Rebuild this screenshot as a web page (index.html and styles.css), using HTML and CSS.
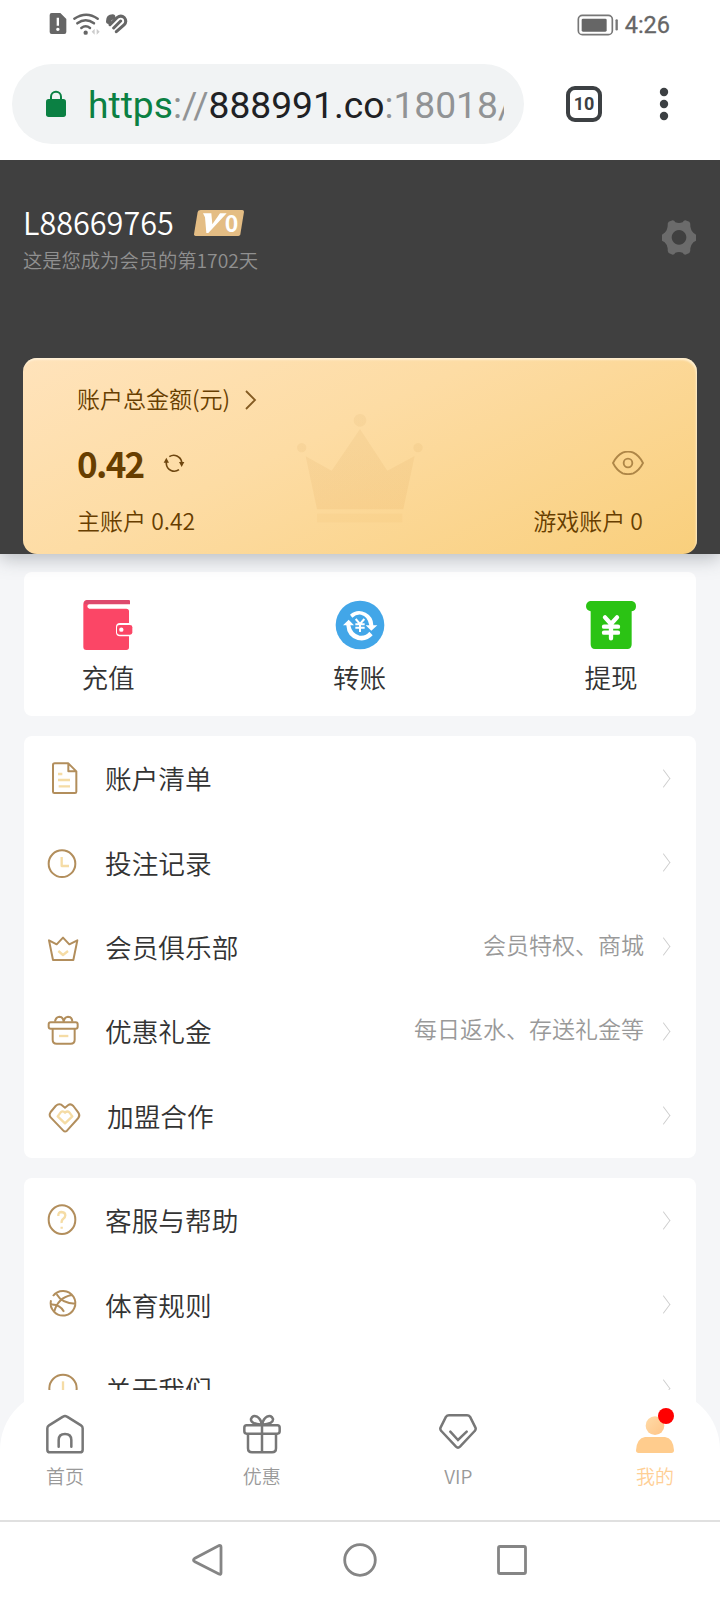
FILE: index.html
```html
<!DOCTYPE html>
<html lang="zh-CN">
<head>
<meta charset="utf-8">
<title>我的</title>
<link rel="stylesheet" href="styles.css">
</head>
<body>
<div class="screen">
  <div class="status">
    <svg class="status-left" width="80" height="24" viewBox="0 0 240 72">
      <path fill="#666" fill-rule="evenodd" d="M8 3h26l18 18v39q0 6-6 6H8q-6 0-6-6V9q0-6 6-6zM23 17v24h7V17zM26.500 47a5 5 0 1 0 .1 0z"/>
      <g fill="none" stroke="#666" stroke-width="7.500" stroke-linecap="round"><path d="M76 20q36-24 70 0"/><path d="M85 34q25-19 50 0"/><path d="M97 48q13-10 26 0"/></g>
      <circle cx="110" cy="62" r="6.500" fill="#666"/>
      <path d="M137 50v18l-9-9zM143 50v18l9-9z" fill="#ccc"/>
      <g fill="none" stroke="#666" stroke-linecap="round"><path d="M179 28q0-13 12-13" stroke-width="16"/><path d="M183 38l21-21q12-9 22 0 9 11-1 22L202 59M194 48l21-21" stroke-width="9"/></g>
    </svg>
    <div class="status-right">
      <svg width="42" height="22" viewBox="0 0 126 66"><rect x="4" y="4" width="102" height="58" rx="12" fill="none" stroke="#777" stroke-width="5"/><rect x="14" y="14" width="75" height="39" rx="4" fill="#666"/><path d="M119 19v27" stroke="#777" stroke-width="7" stroke-linecap="round"/></svg>
      <span class="clock">4:26</span>
    </div>
  </div>
  <div class="browser">
    <div class="omnibox">
      <svg width="22" height="28" viewBox="0 0 66 84"><rect x="3" y="27" width="60" height="54" rx="8" fill="#0b8043"/><path d="M18 29V20a15 15 0 0 1 30 0v9" fill="none" stroke="#0b8043" stroke-width="6"/></svg>
      <div class="url"><span class="scheme">https</span>://<span class="host">888991.co</span>:18018/</div>
    </div>
    <div class="tabs-count">10</div>
    <svg class="more" width="10" height="34" viewBox="0 0 10 34"><g fill="#3c4043"><circle cx="5" cy="5" r="4.200"/><circle cx="5" cy="17" r="4.200"/><circle cx="5" cy="29" r="4.200"/></g></svg>
  </div>

  <header class="profile">
    <div class="user">
      <div class="user-info">
        <div class="name-row"><span class="name">L88669765</span>
          <span class="badge"><svg width="50" height="26" viewBox="0 0 150 78"><path d="M20 0H145q5 0 5 5l-11 68q-1 5-6 5H5q-5 0-5-5L11 6q1-6 9-6z" fill="#e4bd84"/><path d="M27 10h25l3 33 23-33h20L43 69h-6l-4-47z" fill="#fff"/></svg><b class="badge-num">0</b></span>
        </div>
        <div class="since">这是您成为会员的第1702天</div>
      </div>
      <svg class="gear" width="34" height="35" viewBox="0 0 102 105"><path fill="#6b6b6b" fill-rule="evenodd" d="M20 5l12-4q5 0 8 6q11 4 22 0q3-6 8-6l12 4q4 4 3 14q2 14 9 19l8 6v18l-8 5q-7 7-9 18q1 10-3 14l-12 5q-5 0-8-6q-11-4-22 0q-3 6-8 6l-12-5q-4-4-3-14q-2-12-9-18l-8-5V44l8-6q7-5 9-19q-1-10 3-14zM51 30a22 22 0 1 0 .1 0z"/></svg>
    </div>
    <section class="balance">
      <svg class="crown-bg" width="126" height="112" viewBox="0 0 378 336"><defs><linearGradient id="cg" x2="0" y2="1"><stop offset="0" stop-color="#c99a50" stop-opacity=".10"/><stop offset="1" stop-color="#e0a050" stop-opacity=".14"/></linearGradient></defs><path fill="url(#cg)" d="M189 3a19 19 0 1 0 .1 0zM14 90a14 14 0 1 0 .1 0zM363 90a14 14 0 1 0 .1 0zM26 130l78 43L189 48l82 125 82-44-34 160H60z"/><path fill="#e0a050" fill-opacity=".08" d="M60 302h256v26H60z"/></svg>
      <div class="total">账户总金额(元)<svg width="12" height="22" viewBox="0 0 12 22"><path d="M1 2l9 9-9 9" fill="none" stroke="#845b22" stroke-width="1.800"/></svg></div>
      <div class="amount-row">
        <div class="amount">0.42</div>
        <svg class="refresh" width="20" height="20" viewBox="0 0 60 60"><g fill="none" stroke="#6f4710" stroke-width="5"><path d="M7 27v6A24 24 0 0 0 45 50"/><path d="M16 11A24 24 0 0 1 53 27v4"/></g><path d="M-1 29L7 14l8 15zM45 27h16l-8 15z" fill="#6f4710"/></svg>
        <svg class="eye" width="32" height="24" viewBox="0 0 96 72"><g fill="none" stroke="#ae8647" stroke-width="5.500"><path d="M3 36Q14 14 32 5q16-6 32 0q18 9 29 31Q82 58 64 67q-16 5-32 0Q14 58 3 36z" stroke-linejoin="round"/><circle cx="48" cy="36" r="13"/></g></svg>
      </div>
      <div class="accounts"><span>主账户 0.42</span><span>游戏账户 0</span></div>
    </section>
  </header>

  <main class="content">
    <section class="card actions">
      <div class="action"><svg width="50" height="50" viewBox="0 0 150 150"><path d="M14 0H137q4 0 4 5v8H19q-6 0-6 6t6 7H130q8 0 8 8v108q0 8-8 8H10q-9 0-9-9V13Q1 0 14 0z" fill="#fb4666"/><path d="M14 0H137q4 0 4 5v7H3Q6 0 14 0z" fill="#dd496d"/><path d="M139 69h-28q-12 0-12 12v16q0 12 12 12h28z" fill="#fff"/><rect x="102" y="75" width="46" height="29" rx="7" fill="#fb4666"/><circle cx="115" cy="89" r="6.500" fill="#fff"/></svg><span>充值</span></div>
      <div class="action"><svg width="50" height="50" viewBox="0 0 150 150"><circle cx="75" cy="75" r="73" fill="#42a6e8"/><path d="M45 44Q66 26 92 38q23 12 23 38h12l-18 16-17-16h11Q98 48 78 44 64 42 52 53z" fill="#fff"/><path d="M24 76l17-17 16 17H46q5 26 28 31 19 2 29-12l10 11q-17 20-45 14-32-9-34-44z" fill="#fff"/><path d="M62 57l13 15 13-15M61 73h28M61 83h28M75 72v24" fill="none" stroke="#fff" stroke-width="6"/></svg><span>转账</span></div>
      <div class="action"><svg width="50" height="50" viewBox="0 0 150 150"><path d="M12 3h126q12 3 12 16t-13 15v99q0 14-13 14H27q-13 0-13-14V34Q0 31 0 19T12 3z" fill="#2bc314"/><path d="M57 52l18 20 18-20M54 80h42M54 98h42M75 73v42" fill="none" stroke="#fff" stroke-width="13" stroke-linecap="round"/></svg><span>提现</span></div>
    </section>

    <section class="card menu">
      <div class="row"><svg class="ico" viewBox="0 0 108 108"><path d="M67 10H26q-5 0-5 5v80q0 4 4 4h62q4 0 4-4V34L67 10v24h23" class="d"/><path d="M36 42h13M36 60h36M38 79h34" class="l"/></svg><span class="label">账户清单</span><i class="chev"></i></div>
      <div class="row"><svg class="ico" viewBox="0 0 108 108"><circle cx="48" cy="56" r="40" class="d"/><path d="M47 36v27h22" class="l"/></svg><span class="label">投注记录</span><i class="chev"></i></div>
      <div class="row"><svg class="ico" viewBox="0 0 108 108"><path d="M9 34l12 59h61l12-59-24 12-19-20-19 20z" class="d"/><path d="M37 66l14 12 15-12" class="l"/></svg><span class="label">会员俱乐部</span><span class="hint">会员特权、商城</span><i class="chev"></i></div>
      <div class="row"><svg class="ico" viewBox="0 0 108 108"><rect x="8" y="28" width="87" height="19" rx="6" class="d"/><path d="M20 48v32q0 12 12 12h42q12 0 12-12V48M27 26q2-14 13-15 11 0 13 15 2-14 13-15 12 0 13 15" class="d"/><path d="M39 69h28" class="l"/></svg><span class="label">优惠礼金</span><span class="hint">每日返水、存送礼金等</span><i class="chev"></i></div>
      <div class="row"><svg class="ico" viewBox="0 0 108 108"><path d="M57 29L46 20q-9-4-17 4L14 42q-6 8 0 16l38 40q5 5 11 0l34-38q6-8 0-16L82 24q-8-8-15-3z" class="d"/><path d="M57 44q-6-7-13-1l-9 12 22 21 22-21-9-12q-7-6-13 1z" class="l"/></svg><span class="label shifted">加盟合作</span><i class="chev"></i></div>
    </section>

    <section class="card menu">
      <div class="row"><svg class="ico" viewBox="0 0 108 108"><ellipse cx="48" cy="53" rx="40" ry="43" class="d"/><path d="M37 42q-1-12 10-12 11 1 11 10 0 6-6 10t-5 13M47 74v6" class="l"/></svg><span class="label">客服与帮助</span><i class="chev"></i></div>
      <div class="row"><svg class="ico" viewBox="0 0 108 108"><path d="M21 27a37 37 0 1 1-6 13M32 22Q48 50 88 50M77 24Q35 32 24 76M13 53Q40 50 54 74" class="d"/></svg><span class="label">体育规则</span><i class="chev"></i></div>
      <div class="row"><svg class="ico" viewBox="0 0 108 108"><circle cx="51" cy="52" r="41" class="d"/><path d="M51 31v30" class="l"/></svg><span class="label">关于我们</span><i class="chev"></i></div>
    </section>
  </main>

  <div class="tabbar-wrap"><nav class="tabbar">
    <div class="tab"><svg width="38" height="40" viewBox="0 0 114 120"><path d="M4 43q0-6 5-9L51 8q6-4 12 0l42 26q5 3 5 9v64q0 8-8 8H12q-8 0-8-8z"/><path d="M38 98V78q0-18 19-18t19 18v20" stroke-linecap="round"/></svg><span>首页</span></div>
    <div class="tab"><svg width="38" height="40" viewBox="0 0 114 120"><rect x="4" y="34" width="106" height="25" rx="7"/><path d="M15 60v43q0 12 12 12h60q12 0 12-12V60M57 34v81M57 32Q22 30 24 15q5-13 18-7 11 6 15 24 4-18 15-24 13-6 18 7 2 15-33 17"/></svg><span>优惠</span></div>
    <div class="tab"><svg width="38" height="40" viewBox="0 0 114 120"><path d="M30 4h54q6 0 9 4l16 32q3 6-2 11L63 98q-6 6-12 0L7 51q-5-5-2-11L21 8q3-4 9-4zM34 53l23 25 26-25" stroke-linecap="round"/></svg><span>VIP</span></div>
    <div class="tab active"><svg width="38" height="40" viewBox="0 0 114 120"><defs><linearGradient id="ug" x2="1" y2="1"><stop stop-color="#ffdba8"/><stop offset="1" stop-color="#ffc486"/></linearGradient></defs><circle cx="57" cy="35" r="28" fill="url(#ug)"/><path d="M27 69h60q25 4 27 40 0 8-8 8H8q-8 0-8-8 2-36 27-40z" fill="#ffcc8d"/></svg><i class="dot"></i><span>我的</span></div>
  </nav></div>

  <div class="sysnav">
    <svg width="34" height="36" viewBox="0 0 34 36"><path d="M28 3.500Q30 3 30 5V31Q30 33 28 32L3.500 19.500Q1.500 18 3.500 16.500z"/></svg>
    <svg width="34" height="36" viewBox="0 0 34 36"><circle cx="17" cy="18" r="15.300"/></svg>
    <svg width="34" height="36" viewBox="0 0 34 36"><rect x="3.500" y="4.500" width="27" height="27" rx="1.500"/></svg>
  </div>
</div>
</body>
</html>
```

FILE: styles.css
```css
* { box-sizing: border-box; }
body { margin: 0; background: #fff; font-family: "Noto Sans CJK SC", sans-serif; font-weight: 350; }
svg { display: block; flex: none; }
i { font-style: normal; }
.screen { width: 720px; height: 1600px; overflow: hidden; display: flex; flex-direction: column; background: #f5f6f8; }

.status { height: 48px; background: #fff; display: flex; justify-content: space-between; padding: 12px 50px 0 49px; }
.status-right { display: flex; gap: 6px; height: 25px; align-items: center; font: 500 23.500px/26px Roboto, sans-serif; color: #666; }
.clock { font-weight: 400; -webkit-text-stroke: .3px #666; }

.browser { height: 112px; background: #fff; display: flex; align-items: center; padding: 0 51px 0 12px; }
.omnibox { width: 512px; height: 80px; border-radius: 40px; background: #f1f3f4; display: flex; align-items: center; padding: 0 20px 0 33px; margin-right: 42px; }
.url { margin-left: 21px; width: 416px; overflow: hidden; white-space: nowrap; font: 400 37.200px/52px Roboto, sans-serif; color: #919395; padding-top: 1px; }
.scheme { color: #0b8043; }
.host { color: #202124; }
.tabs-count { width: 36px; height: 36px; border: 4px solid #3c4043; border-radius: 9px; font: 700 18px/28px Roboto, sans-serif; color: #3c4043; text-align: center; }
.more { margin-left: auto; }

.profile { height: 394px; background: #404040; padding: 45px 23px 0; flex: none; position: relative; box-shadow: 0 4px 18px rgba(60, 70, 80, .35); clip-path: inset(0 0 -40px 0); }
.user { display: flex; justify-content: space-between; height: 153px; }
.name-row { display: flex; height: 36px; align-items: center; gap: 20px; }
.name { color: #fff; font-size: 30.600px; line-height: 34px; height: 37px; }
.badge { position: relative; }
.badge-num { position: absolute; left: 31px; top: -1px; font: 700 23px/26px "Noto Sans CJK SC", sans-serif; color: #fff; }
.since { color: #909090; font-size: 19.300px; line-height: 28px; margin-top: 5px; }
.gear { margin: 15px 1px 0 0; }
.balance { position: relative; height: 196px; border-radius: 14px; padding: 21px 54px 0 54px; color: #673e00; background: linear-gradient(155deg, #ffe3bb 0%, #fddca4 42%, #f9cf7c 100%); box-shadow: inset -1px 2px 2px rgba(255, 246, 225, .75); }
.crown-bg { position: absolute; left: 274px; top: 55px; }
.total { position: relative; display: flex; align-items: center; gap: 15px; font-size: 23px; line-height: 38px; height: 38px; }
.total svg { position: relative; top: 2px; }
.amount-row { display: flex; align-items: center; height: 52px; margin-top: 20px; }
.amount { font-weight: 700; font-size: 35px; line-height: 52px; letter-spacing: -1.700px; }
.refresh { margin-left: 20px; overflow: visible; }
.eye { margin: 0 -1px 0 auto; }
.accounts { display: flex; justify-content: space-between; font-size: 23px; line-height: 34px; margin-top: 14px; }

.content { height: 836px; flex: none; overflow: hidden; padding: 18px 24px 0; display: flex; flex-direction: column; gap: 20px; }
.card { background: #fff; border-radius: 8px; flex: none; }
.actions { height: 144px; display: flex; justify-content: space-between; padding: 28px 58px 0 57px; }
.action { width: 54px; display: flex; flex-direction: column; align-items: center; color: #333; font-size: 26.600px; line-height: 40px; gap: 7px; }
.menu { height: 422px; }
.row { height: 84.400px; display: flex; align-items: center; padding: 0 26px 0 22px; color: #333; }
.ico { width: 36px; height: 36px; margin-right: 23px; fill: none; stroke-width: 5; stroke-linejoin: round; }
.d { stroke: #b28e5c; stroke-width: 6; }
.l { stroke: #f5dca5; stroke-width: 7; }
.label { font-size: 26.700px; line-height: 40px; }
.shifted { padding-left: 2px; }
.hint { margin-left: auto; font-size: 23px; line-height: 36px; color: #999; position: relative; top: -3px; }
.chev { width: 13px; height: 13px; border: solid #ccc; border-width: 1.500px 1.500px 0 0; transform: scaleX(.75) rotate(45deg); margin-left: auto; }
.hint + .chev { margin-left: 13px; }

.tabbar-wrap { height: 130px; flex: none; background: linear-gradient(90deg, transparent 24px, #fff 24px, #fff 696px, transparent 696px); }
.tabbar { height: 130px; background: #fff; border-radius: 60px 60px 0 0; display: flex; justify-content: space-between; padding: 24px 46px 0; }
.tab { width: 38px; display: flex; flex-direction: column; align-items: center; gap: 8px; color: #999; font-size: 19px; line-height: 28px; position: relative; white-space: nowrap; }
.tab svg { fill: none; stroke: #777; stroke-width: 7.500; }
.tab.active { color: #ffcf95; }
.tab.active svg { stroke: none; }
.dot { position: absolute; width: 16px; height: 16px; border-radius: 50%; background: #f00; right: 0; top: -6px; }
.sysnav { height: 80px; border-top: 2px solid #e0e0e0; background: #fff; display: flex; justify-content: center; gap: 118px; padding-top: 20px; }
.sysnav svg { fill: none; stroke: #858585; stroke-width: 2.800; }
```
